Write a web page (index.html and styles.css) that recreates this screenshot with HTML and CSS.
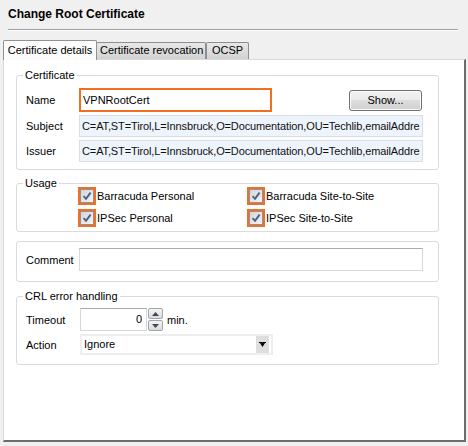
FILE: index.html
```html
<!DOCTYPE html>
<html>
<head>
<meta charset="utf-8">
<link rel="stylesheet" href="styles.css">
</head>
<body>
<div class="dialog">
  <div class="title">Change Root Certificate</div>
  <div class="sep"></div>
  <div class="tabs">
    <div class="tab active">Certificate details</div>
    <div class="tab t-rev">Certificate revocation</div>
    <div class="tab t-ocsp">OCSP</div>
  </div>
  <div class="panel">
    <fieldset class="group g-cert">
      <legend>Certificate</legend>
      <div class="row r-name">
        <span class="lbl">Name</span>
        <div class="input name hl">VPNRootCert</div>
        <div class="spacer"></div>
        <div class="btn">Show...</div>
      </div>
      <div class="row r-sub">
        <span class="lbl">Subject</span>
        <div class="ro">C=AT,ST=Tirol,L=Innsbruck,O=Documentation,OU=Techlib,emailAddre</div>
      </div>
      <div class="row r-iss">
        <span class="lbl">Issuer</span>
        <div class="ro">C=AT,ST=Tirol,L=Innsbruck,O=Documentation,OU=Techlib,emailAddre</div>
      </div>
    </fieldset>

    <fieldset class="group g-usage">
      <legend>Usage</legend>
      <div class="checks">
        <label class="chk"><span class="cbw"><span class="cb"><svg viewBox="0 0 12 12" width="12" height="12"><path d="M2.6 6.2 L5 8.8 L9.6 2.6" fill="none" stroke="#4c5f86" stroke-width="1.9"/></svg></span></span>Barracuda Personal</label>
        <label class="chk"><span class="cbw"><span class="cb"><svg viewBox="0 0 12 12" width="12" height="12"><path d="M2.6 6.2 L5 8.8 L9.6 2.6" fill="none" stroke="#4c5f86" stroke-width="1.9"/></svg></span></span>Barracuda Site-to-Site</label>
        <label class="chk"><span class="cbw"><span class="cb"><svg viewBox="0 0 12 12" width="12" height="12"><path d="M2.6 6.2 L5 8.8 L9.6 2.6" fill="none" stroke="#4c5f86" stroke-width="1.9"/></svg></span></span>IPSec Personal</label>
        <label class="chk"><span class="cbw"><span class="cb"><svg viewBox="0 0 12 12" width="12" height="12"><path d="M2.6 6.2 L5 8.8 L9.6 2.6" fill="none" stroke="#4c5f86" stroke-width="1.9"/></svg></span></span>IPSec Site-to-Site</label>
      </div>
    </fieldset>

    <fieldset class="group g-comment">
      <div class="row">
        <span class="lbl">Comment</span>
        <div class="input comment"></div>
      </div>
    </fieldset>

    <fieldset class="group g-crl">
      <legend>CRL error handling</legend>
      <div class="row r-timeout">
        <span class="lbl">Timeout</span>
        <div class="input spin">0</div>
        <div class="spinbtns">
          <div class="sb"><svg viewBox="0 0 7 4" width="7" height="4"><path d="M0 4 L3.5 0 L7 4 Z" fill="#3c4a5c"/></svg></div>
          <div class="sb"><svg viewBox="0 0 7 4" width="7" height="4"><path d="M0 0 L7 0 L3.5 4 Z" fill="#3c4a5c"/></svg></div>
        </div>
        <span class="unit">min.</span>
      </div>
      <div class="row r-action">
        <span class="lbl">Action</span>
        <div class="select">
          <span class="sel-text">Ignore</span>
          <span class="dd"><svg viewBox="0 0 7 5" width="7" height="5"><path d="M0 0 L7 0 L7 1 L6 1 L3.5 5 L1 1 L0 1 Z" fill="#000"/></svg></span>
        </div>
      </div>
    </fieldset>
  </div>
</div>
</body>
</html>
```
FILE: styles.css
```css
* { box-sizing: border-box; }
html, body { margin: 0; padding: 0; }
body {
  background: #f0f0f0;
  font-family: "Liberation Sans", Arial, sans-serif;
  font-size: 11px;
  color: #000;
  width: 468px;
  height: 446px;
  overflow: hidden;
}
.dialog { width: 468px; height: 446px; }

.title {
  padding: 7px 0 0 8px;
  height: 21px;
  line-height: 14px;
  font-size: 12px;
  font-weight: bold;
}
.sep {
  margin: 8px 10px 0 8px;
  border-top: 1px solid #a0a0a0;
  border-bottom: 1px solid #ffffff;
  height: 2px;
}

.tabs {
  display: flex;
  align-items: flex-end;
  margin-top: 9px;
  padding-left: 3px;
  height: 19px;
}
.tab {
  height: 17px;
  line-height: 15px;
  padding: 0 4px;
  border: 1px solid #8c8e94;
  border-bottom: none;
  border-radius: 2px 2px 0 0;
  background: linear-gradient(#e8e8e8, #d2d2d2);
  white-space: nowrap;
  text-align: center;
}
.tab.active {
  position: relative;
  z-index: 1;
  height: 20px;
  margin-bottom: -1px;
  width: 94px;
  padding: 2px 0 0 0;
  background: #fcfcfc;
  border-color: #8e9196;
}
.tab.t-rev { width: 110px; margin-left: -1px; border-left: none; }
.tab.t-ocsp { width: 43px; margin-left: 0; border-left: 1px solid #8c8e94; }

.panel {
  margin-left: 3px;
  width: 463px;
  height: 383px;
  background: #ffffff;
  border-top: 1px solid #d9d9d9;
  border-left: 1px solid #d9d9d9;
  border-right: 2px solid #6c6c6c;
  border-bottom: 2px solid #6c6c6c;
  padding-top: 9px;
}

.group {
  margin: 0 0 0 12px;
  width: 423px;
  border: 1px solid #d9dbdf;
  border-radius: 3px;
  padding: 0 15px 0 9px;
  min-width: 0;
}
.group legend {
  margin-left: -3px;
  padding: 0 2px;
  line-height: 13px;
  font-size: 11px;
}

.row {
  display: flex;
  align-items: center;
}
.lbl {
  width: 53px;
  flex: none;
}

.g-cert { padding-top: 6px; padding-bottom: 7px; }
.r-name { height: 24px; }
.r-sub { height: 22px; margin-top: 3px; }
.r-iss { height: 22px; margin-top: 3px; }

.input {
  height: 23px;
  background: #fff;
  border: 1px solid #d6d8dd;
  border-top-color: #a9abb1;
  padding: 0 3px;
  line-height: 21px;
  white-space: nowrap;
  overflow: hidden;
}
.input.name {
  width: 193px;
  height: 24px;
  border: 2px solid #f26f21;
  line-height: 20px;
  padding-left: 2px;
}
.spacer { flex: 1; }
.btn {
  width: 73px;
  height: 21px;
  margin-right: 1px;
  border: 1px solid #707070;
  border-radius: 3px;
  background: linear-gradient(#f2f2f2 0%, #ebebeb 45%, #dddddd 50%, #cfcfcf 100%);
  text-align: center;
  line-height: 19px;
  box-shadow: inset 0 0 0 1px #fcfcfc;
}
.ro {
  flex: 1;
  height: 22px;
  background: #edf4fc;
  border: 1px solid #dadde2;
  padding-left: 2px;
  line-height: 20px;
  white-space: nowrap;
  overflow: hidden;
  color: #111;
  letter-spacing: -0.12px;
}

.g-usage { margin-top: 7px; padding: 0 0 4px 9px; }
.checks {
  display: grid;
  grid-template-columns: 169px 1fr;
  row-gap: 4px;
  margin-top: -3px;
  margin-left: 52px;
}
.chk {
  display: flex;
  align-items: center;
  height: 18px;
  white-space: nowrap;
}
.cbw {
  width: 18px;
  height: 18px;
  border: 2px solid #f26f21;
  margin-right: 1px;
  display: flex;
}
.cb {
  width: 14px;
  height: 14px;
  border: 1px solid #8f9194;
  background: linear-gradient(135deg, #d2d4d8, #f4f4f5);
  display: flex;
  align-items: center;
  justify-content: center;
}

.g-comment { margin-top: 9px; padding-top: 6px; padding-bottom: 10px; }
.input.comment { flex: 1; }

.g-crl { margin-top: 8px; padding-top: 5px; padding-bottom: 9px; }
.r-timeout { height: 23px; }
.input.spin {
  width: 67px;
  text-align: right;
  padding-right: 4px;
  margin-left: 1px;
}
.spinbtns {
  display: flex;
  flex-direction: column;
  gap: 1px;
  margin-left: 1px;
}
.sb {
  width: 15px;
  height: 11px;
  border: 1px solid #a3a5a9;
  border-radius: 2px;
  background: linear-gradient(#f4f4f4, #d9dadc);
  display: flex;
  align-items: center;
  justify-content: center;
}
.unit { margin-left: 4px; }

.r-action { margin-top: 3px; height: 21px; }
.select {
  width: 193px;
  height: 21px;
  margin-left: 1px;
  border: 2px solid #eeeeee;
  background: #fff;
  display: flex;
  align-items: center;
  justify-content: space-between;
  padding-left: 2px;
}
.sel-text { line-height: 17px; }
.dd {
  width: 13px;
  height: 17px;
  background: #dedede;
  margin-right: 2px;
  display: flex;
  align-items: center;
  justify-content: center;
}
```
